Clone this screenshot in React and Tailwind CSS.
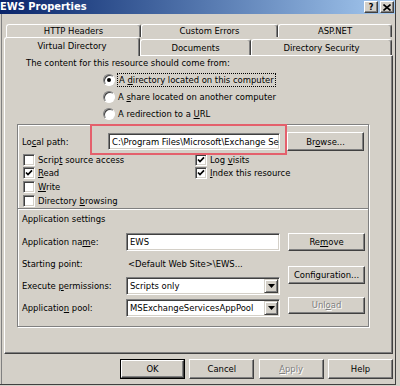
import React from "react";

const FONT = "font-['DejaVu_Sans_Condensed','Liberation_Sans',sans-serif]";

function U({ children }) {
  return <span className="underline underline-offset-[1px] decoration-[1px]">{children}</span>;
}

function Btn({ children, className = "", disabled = false, def = false }) {
  return (
    <div className={`bg-[#d4d0c8] ${def ? "border border-black" : ""} ${className}`}>
      <div className="w-full h-full flex items-center justify-center border border-t-white border-l-white border-r-[#404040] border-b-[#404040] shadow-[inset_-1px_-1px_0_#808080]">
        <span className={disabled ? "text-[#808080] [text-shadow:1px_1px_0_#fff]" : "text-black"}>{children}</span>
      </div>
    </div>
  );
}

function Field({ children, className = "" }) {
  return (
    <div className={`bg-white border border-t-[#808080] border-l-[#808080] border-r-white border-b-white shadow-[inset_1px_1px_0_#404040,inset_-1px_-1px_0_#d4d0c8] flex items-center overflow-hidden whitespace-nowrap ${className}`}>
      {children}
    </div>
  );
}

function Check({ checked }) {
  return (
    <div className="w-[12px] h-[12px] shrink-0 bg-white border border-t-[#808080] border-l-[#808080] border-r-white border-b-white shadow-[inset_1px_1px_0_#404040,inset_-1px_-1px_0_#d4d0c8] flex items-center justify-center">
      {checked && (
        <svg width="8" height="8" viewBox="0 0 8 8">
          <path d="M1 3.5 L3 5.6 L7 1.4" stroke="black" strokeWidth="1.7" fill="none" />
        </svg>
      )}
    </div>
  );
}

function Radio({ checked }) {
  return (
    <div className="w-[12px] h-[12px] shrink-0 rounded-full bg-white border border-t-[#808080] border-l-[#808080] border-r-white border-b-white shadow-[inset_1px_1px_0_#404040] flex items-center justify-center">
      {checked && <div className="w-[4px] h-[4px] rounded-full bg-black" />}
    </div>
  );
}

function Combo({ value }) {
  return (
    <Field className="w-[154px] h-[18px] pl-[3px] pr-[1px] justify-between">
      <span>{value}</span>
      <div className="w-[14px] h-[14px] shrink-0 bg-[#d4d0c8] border border-t-[#d4d0c8] border-l-[#d4d0c8] border-r-[#404040] border-b-[#404040] shadow-[inset_1px_1px_0_#fff,inset_-1px_-1px_0_#808080] flex items-center justify-center">
        <svg width="7" height="4" viewBox="0 0 7 4">
          <polygon points="0,0 7,0 3.5,4" fill="black" />
        </svg>
      </div>
    </Field>
  );
}

function Tab({ children, className = "" }) {
  return (
    <div className={`bg-[#d4d0c8] border-t border-l border-r border-t-white border-l-white border-r-[#404040] rounded-t-[3px] shadow-[inset_-1px_0_0_#808080] flex items-center justify-center whitespace-nowrap ${className}`}>
      {children}
    </div>
  );
}

function CheckRow({ checked, children }) {
  return (
    <div className="h-[13.67px] flex items-center gap-[3px] whitespace-nowrap">
      <Check checked={checked} />
      <span>{children}</span>
    </div>
  );
}

export default function App() {
  return (
    <div className={`w-[400px] h-[386px] bg-[#d4d0c8] overflow-hidden text-[9.4px] leading-[12px] text-black ${FONT}`}>
      <div className="w-[396px] h-[385px] border-r border-b border-[#404040] flex flex-col">
        {/* Title bar */}
        <div className="h-[14px] shrink-0 bg-gradient-to-r from-[#0a246a] to-[#a6caf0] flex items-center justify-between">
          <span className="text-white font-bold text-[11px] leading-[12px] whitespace-nowrap">EWS Properties</span>
          <div className="flex gap-[2px] mr-[1px]">
            <div className="w-[14px] h-[12px] bg-[#d4d0c8] border border-t-white border-l-white border-r-[#404040] border-b-[#404040] shadow-[inset_-1px_-1px_0_#808080] flex items-center justify-center text-[9px] font-bold leading-[9px]">
              ?
            </div>
            <div className="w-[14px] h-[12px] bg-[#d4d0c8] border border-t-white border-l-white border-r-[#404040] border-b-[#404040] shadow-[inset_-1px_-1px_0_#808080] flex items-center justify-center">
              <svg width="8" height="7" viewBox="0 0 8 7">
                <path d="M0.5 0.5 L7.5 6.5 M7.5 0.5 L0.5 6.5" stroke="black" strokeWidth="1.6" />
              </svg>
            </div>
          </div>
        </div>

        {/* Body */}
        <div className="flex-1 ml-[1px] border-l border-[#808080] flex flex-col">
          {/* Tabs row 1 */}
          <div className="mt-[10px] h-[13px] pl-[4px] flex">
            <Tab className="w-[135px] h-[13px]">HTTP Headers</Tab>
            <Tab className="w-[137px] h-[13px]">Custom Errors</Tab>
            <Tab className="w-[114px] h-[13px]">ASP.NET</Tab>
          </div>
          {/* Tabs row 2 */}
          <div className="h-[18px] pl-[2px] flex items-start">
            <Tab className="w-[136px] h-[19px] relative z-10 pb-[3px]">Virtual Directory</Tab>
            <Tab className="w-[111px] h-[16px] mt-[2px]">Documents</Tab>
            <Tab className="w-[141px] h-[16px] mt-[2px]">Directory Security</Tab>
          </div>

          {/* Panel */}
          <div className="ml-[2px] w-[389px] h-[299px] border border-t-white border-l-white border-r-[#404040] border-b-[#404040] shadow-[inset_-1px_-1px_0_#808080] flex flex-col">
            <div className="mt-[1px] pl-[21px] h-[12px] whitespace-nowrap">The content for this resource should come from:</div>
            <div className="mt-[3px] ml-[98px] flex flex-col gap-[1px] whitespace-nowrap">
              <div className="h-[16px] flex items-center gap-[2px]">
                <Radio checked />
                <span className="border border-dotted border-black px-[1px] leading-[12px]">
                  A <U>d</U>irectory located on this computer
                </span>
              </div>
              <div className="h-[16px] flex items-center gap-[3px]">
                <Radio />
                <span>
                  A <U>s</U>hare located on another computer
                </span>
              </div>
              <div className="h-[16px] flex items-center gap-[3px]">
                <Radio />
                <span>
                  A redirection to a <U>U</U>RL
                </span>
              </div>
            </div>

            {/* Group frame */}
            <div className="relative mt-[2px] ml-[12px] w-[352px] h-[203px] border border-[#808080] shadow-[inset_1px_1px_0_#fff,1px_1px_0_#fff] flex flex-col">
              <div className="absolute left-[72px] top-[-1px] w-[197px] h-[31px] border-2 border-[#e4606c]" />

              <div className="mt-[7px] ml-[4px] h-[19px] flex items-center whitespace-nowrap">
                <div className="w-[86px]">
                  Lo<U>c</U>al path:
                </div>
                <Field className="w-[172px] h-[17px] pl-[3px]">
                  C:\Program Files\Microsoft\Exchange Server\ClientAccess\exchweb\EWS
                </Field>
                <Btn className="ml-[7px] w-[77px] h-[19px]">
                  Br<U>o</U>wse...
                </Btn>
              </div>

              <div className="mt-[2px] ml-[5px] grid grid-cols-[172px_auto]">
                <CheckRow>
                  Scrip<U>t</U> source access
                </CheckRow>
                <CheckRow checked>
                  Log <U>v</U>isits
                </CheckRow>
                <CheckRow checked>
                  <U>R</U>ead
                </CheckRow>
                <CheckRow checked>
                  <U>I</U>ndex this resource
                </CheckRow>
                <CheckRow>
                  <U>W</U>rite
                </CheckRow>
                <div />
                <CheckRow>
                  Directory <U>b</U>rowsing
                </CheckRow>
                <div />
              </div>

              <div className="h-[2px] border-t border-t-[#808080] border-b border-b-white" />

              <div className="mt-[3px] ml-[4px] h-[12px]">Application settings</div>

              <div className="mt-[8px] ml-[4px] flex whitespace-nowrap">
                <div className="w-[258px] flex flex-col">
                  <div className="h-[18px] flex items-center">
                    <div className="w-[104px]">
                      Application na<U>m</U>e:
                    </div>
                    <Field className="w-[154px] h-[18px] pl-[3px]">EWS</Field>
                  </div>
                  <div className="mt-[7px] h-[12px] flex items-center">
                    <div className="w-[106px]">Starting point:</div>
                    <span>&lt;Default Web Site&gt;\EWS...</span>
                  </div>
                  <div className="mt-[7px] h-[18px] flex items-center">
                    <div className="w-[104px]">
                      Execute <U>p</U>ermissions:
                    </div>
                    <Combo value="Scripts only" />
                  </div>
                  <div className="mt-[4px] h-[18px] flex items-center">
                    <div className="w-[104px]">
                      Applicatio<U>n</U> pool:
                    </div>
                    <Combo value="MSExchangeServicesAppPool" />
                  </div>
                </div>
                <div className="ml-[8px] flex flex-col">
                  <Btn className="w-[77px] h-[18px]">
                    Re<U>m</U>ove
                  </Btn>
                  <Btn className="mt-[15px] w-[77px] h-[18px]">
                    Confi<U>g</U>uration...
                  </Btn>
                  <Btn disabled className="mt-[13px] w-[77px] h-[17px]">
                    Unl<U>o</U>ad
                  </Btn>
                </div>
              </div>
            </div>
          </div>

          {/* Dialog buttons */}
          <div className="mt-[5px] pl-[118px] flex gap-[4.33px]">
            <Btn def className="w-[65px] h-[20px]">OK</Btn>
            <Btn className="w-[65px] h-[20px]">Cancel</Btn>
            <Btn disabled className="w-[65px] h-[20px]">
              <U>A</U>pply
            </Btn>
            <Btn className="w-[65px] h-[20px]">Help</Btn>
          </div>
        </div>
      </div>
    </div>
  );
}
